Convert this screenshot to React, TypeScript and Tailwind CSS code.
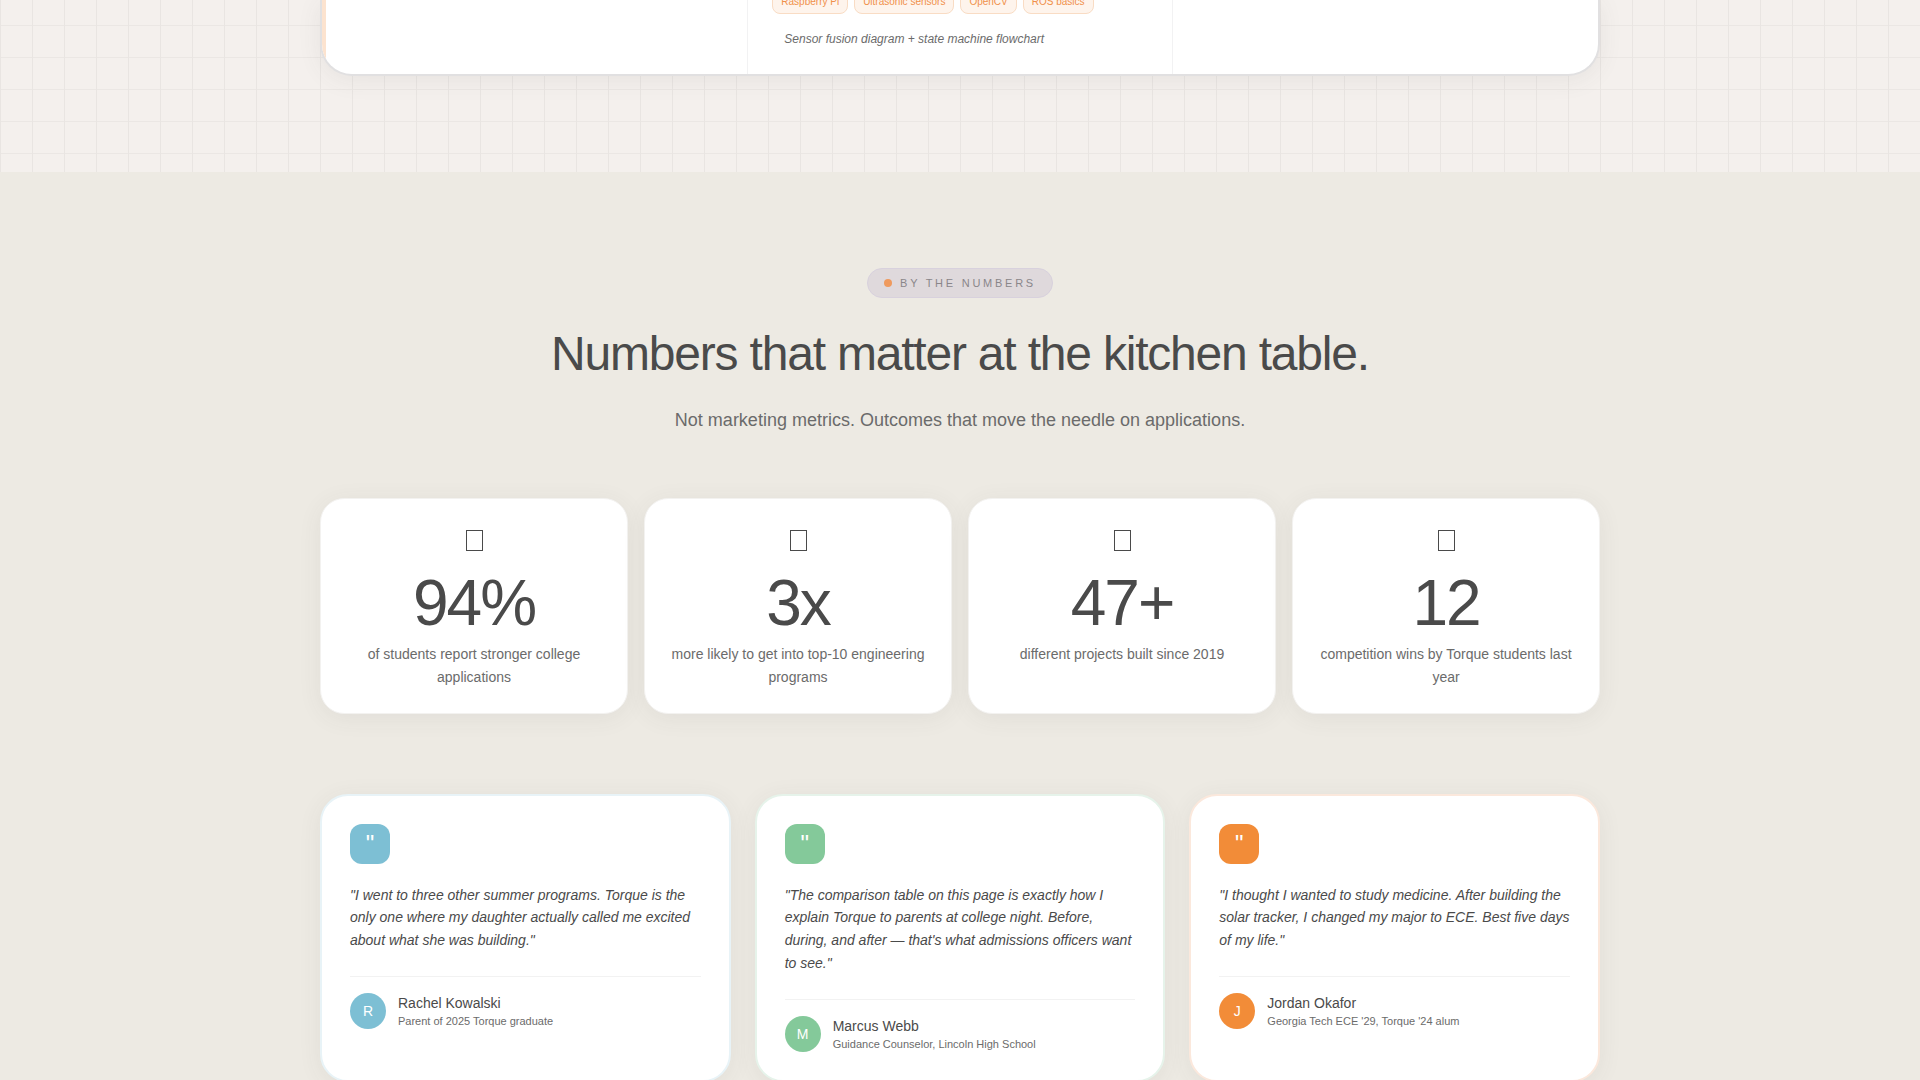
import React from 'react';

const tools = ['Raspberry Pi', 'Ultrasonic sensors', 'OpenCV', 'ROS basics'];

const stats = [
  { value: '94%', label: 'of students report stronger college applications' },
  { value: '3x', label: 'more likely to get into top-10 engineering programs' },
  { value: '47+', label: 'different projects built since 2019' },
  { value: '12', label: 'competition wins by Torque students last year' },
];

const testimonials = [
  {
    quote:
      '"I went to three other summer programs. Torque is the only one where my daughter actually called me excited about what she was building."',
    name: 'Rachel Kowalski',
    role: 'Parent of 2025 Torque graduate',
    fill: 'bg-[#7dbfd4]',
    border: 'border-[#e8f3f7]',
  },
  {
    quote:
      '"The comparison table on this page is exactly how I explain Torque to parents at college night. Before, during, and after — that\'s what admissions officers want to see."',
    name: 'Marcus Webb',
    role: 'Guidance Counselor, Lincoln High School',
    fill: 'bg-[#84c99a]',
    border: 'border-[#e6f3ea]',
  },
  {
    quote:
      '"I thought I wanted to study medicine. After building the solar tracker, I changed my major to ECE. Best five days of my life."',
    name: 'Jordan Okafor',
    role: "Georgia Tech ECE '29, Torque '24 alum",
    fill: 'bg-[#f28c38]',
    border: 'border-[#fbe8dc]',
  },
];

function ProjectsSection() {
  return (
    <section className="overflow-hidden bg-[#f4f0ed] bg-[linear-gradient(to_right,#e9e5e2_1px,transparent_1px),linear-gradient(to_bottom,#ebe7e4_1px,transparent_1px)] bg-[size:32px_32px] bg-[position:0_25px] pb-24">
      <div className="mx-auto max-w-7xl overflow-hidden rounded-b-[32px] border-2 border-t-0 border-[#e1e0e1] bg-white shadow-[0_4px_24px_rgba(74,74,74,0.08)]">
        <div className="grid grid-cols-3">
          <div className="border-l-4 border-[#fce3cf]" />
          <div className="-mt-2.5 border-x border-[#f2f2f3] pb-[26px] pl-6">
            <ul className="flex gap-1.5">
              {tools.map((tool) => (
                <li
                  key={tool}
                  className="rounded-lg border border-[#f9dcc4] bg-[#fef4ec] px-2 py-[3px] text-[10px] leading-4 whitespace-nowrap text-[#f0904a]"
                >
                  {tool}
                </li>
              ))}
            </ul>
            <p className="mt-4 pl-3 text-xs leading-[18px] text-[#6b6b6b] italic">
              Sensor fusion diagram + state machine flowchart
            </p>
          </div>
          <div />
        </div>
      </div>
    </section>
  );
}

function StatCard({ value, label }: { value: string; label: string }) {
  return (
    <li className="flex flex-col items-center rounded-3xl border border-[#f3f2f0] bg-white px-6 pt-[31px] pb-6 text-center shadow-[0_4px_24px_rgba(74,74,74,0.07)]">
      <span className="h-[21px] w-[17px] border border-[#4a4a4a]" />
      <p className="mt-5 text-[64px] leading-[64px] tracking-[-2px] text-[#4a4a4a]">{value}</p>
      <p className="mt-2 text-sm leading-relaxed text-[#6b6b6b]">{label}</p>
    </li>
  );
}

function TestimonialCard({ quote, name, role, fill, border }: (typeof testimonials)[number]) {
  return (
    <figure
      className={`rounded-[28px] border-2 bg-white p-7 shadow-[0_4px_24px_rgba(74,74,74,0.07)] ${border}`}
    >
      <div
        className={`flex size-10 items-center justify-center rounded-xl text-2xl text-white ${fill}`}
        aria-hidden="true"
      >
        "
      </div>
      <blockquote className="mt-5 text-sm leading-relaxed text-[#4a4a4a] italic">{quote}</blockquote>
      <figcaption className="mt-6 flex items-center gap-3 border-t border-[#f2f2f2] pt-4">
        <span className={`flex size-9 items-center justify-center rounded-full text-sm text-white ${fill}`}>
          {name[0]}
        </span>
        <div>
          <p className="text-sm leading-5 text-[#4a4a4a]">{name}</p>
          <p className="text-[11px] leading-4 text-[#6b6b6b]">{role}</p>
        </div>
      </figcaption>
    </figure>
  );
}

function NumbersSection() {
  return (
    <section className="bg-[#edeae3] pt-24">
      <div className="mx-auto max-w-7xl">
        <div className="flex flex-col items-center text-center">
          <span className="flex items-center gap-2 rounded-full border border-[#d8d1dd] bg-[#dfd9dc] px-4 py-1.5 text-[11px] leading-4 tracking-[0.25em] text-[#8a868a]">
            <span className="size-2 rounded-full bg-[#ef9a5e]" />
            BY THE NUMBERS
          </span>
          <h2 className="mt-6 text-5xl leading-[64px] tracking-tight text-[#4a4a4a]">
            Numbers that matter at the kitchen table.
          </h2>
          <p className="mt-5 text-lg leading-7 text-[#6b6b6b]">
            Not marketing metrics. Outcomes that move the needle on applications.
          </p>
        </div>
        <ul className="mt-16 grid grid-cols-4 gap-4">
          {stats.map((stat) => (
            <StatCard key={stat.value} {...stat} />
          ))}
        </ul>
        <div className="mt-20 grid grid-cols-3 gap-6">
          {testimonials.map((testimonial) => (
            <TestimonialCard key={testimonial.name} {...testimonial} />
          ))}
        </div>
      </div>
    </section>
  );
}

export default function App() {
  return (
    <main className="h-screen overflow-hidden bg-[#edeae3] font-['Liberation_Sans',Arial,sans-serif]">
      <ProjectsSection />
      <NumbersSection />
    </main>
  );
}
